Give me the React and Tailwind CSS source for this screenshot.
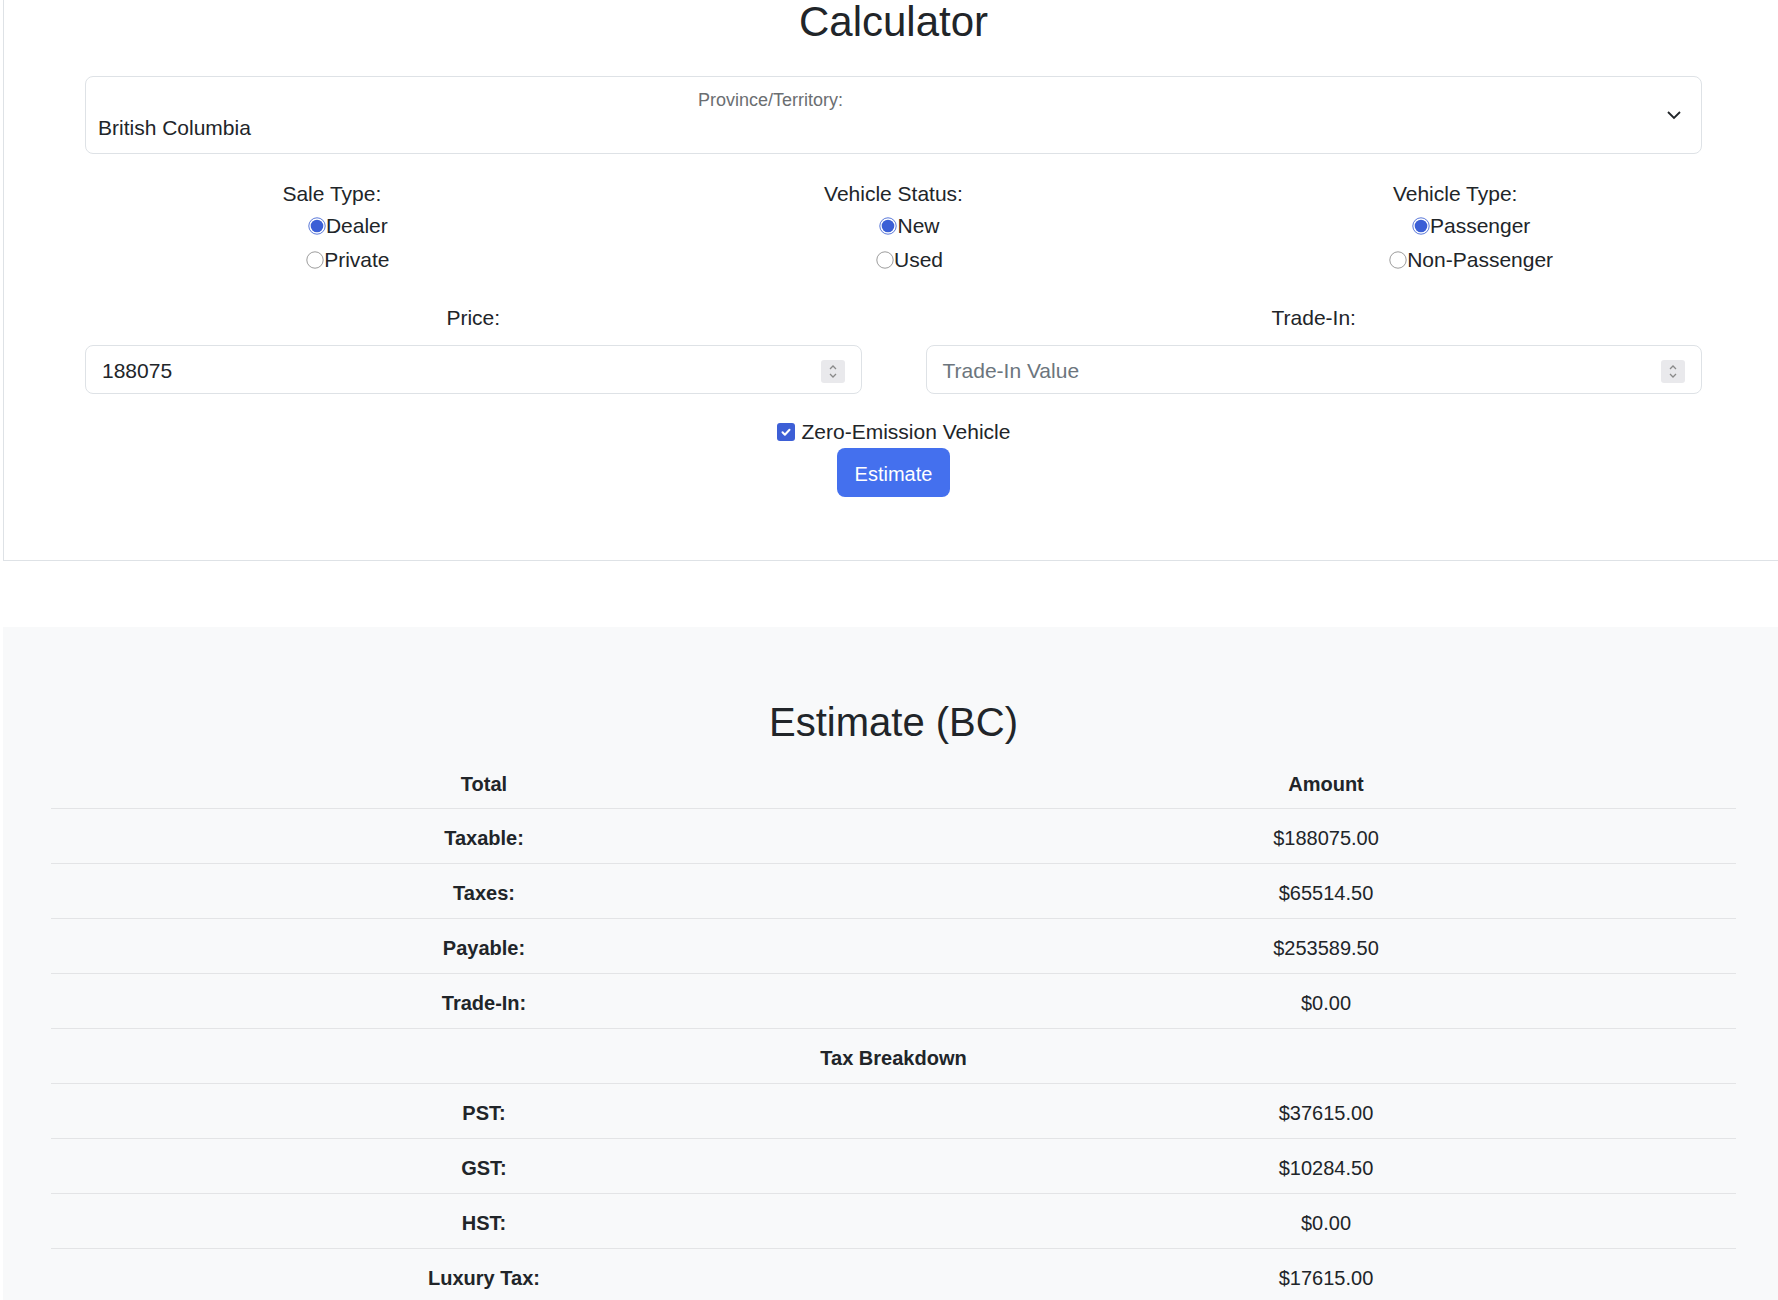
import React from "react";

// Vehicle tax calculator: form card on top, estimate table below.

const RadioDot = ({ checked }) => (
  <svg width="18" height="18" viewBox="0 0 18 18" className="shrink-0">
    <circle cx="9" cy="9" r="8.2" fill="#fff" stroke={checked ? "#5a78d8" : "#9c9c9c"} strokeWidth="1" />
    {checked && <circle cx="9" cy="9" r="6.3" fill="#3b5fd6" />}
  </svg>
);

const Option = ({ label, checked }) => (
  <div className="flex justify-center pl-8 leading-[34px]">
    <span className="flex items-center">
      <RadioDot checked={checked} />
      <span>{label}</span>
    </span>
  </div>
);

const RadioGroup = ({ title, options }) => (
  <div className="text-center">
    <div className="leading-[30px]">{title}</div>
    {options.map((o) => (
      <Option key={o.label} label={o.label} checked={o.checked} />
    ))}
  </div>
);

const Spinner = () => (
  <div className="w-[24px] h-[23px] rounded-[3px] bg-[#e9e9ec] flex items-center justify-center">
    <svg width="12" height="17" viewBox="0 0 12 17" fill="none" stroke="#8a8a8a" strokeWidth="1.3">
      <path d="M3 6l3-3 3 3" />
      <path d="M3 11l3 3 3-3" />
    </svg>
  </div>
);

const NumberField = ({ label, value, placeholder }) => (
  <div>
    <div className="text-center leading-[30px]">{label}</div>
    <div className="mt-[12px] h-[49px] border border-[#dee2e6] rounded-[8px] bg-white flex items-center pl-[16px] pr-[16px] pt-[3px]">
      <span className={value ? "flex-1" : "flex-1 text-[#6c757d]"}>{value || placeholder}</span>
      <Spinner />
    </div>
  </div>
);

const rows = [
  ["Taxable:", "$188075.00"],
  ["Taxes:", "$65514.50"],
  ["Payable:", "$253589.50"],
  ["Trade-In:", "$0.00"],
];

const breakdown = [
  ["PST:", "$37615.00"],
  ["GST:", "$10284.50"],
  ["HST:", "$0.00"],
  ["Luxury Tax:", "$17615.00"],
];

const Row = ({ label, value }) => (
  <div className="grid grid-cols-[866px_818px] h-[55px] items-center border-b border-[#e3e4e6] text-center pt-[3px]">
    <div className="font-bold">{label}</div>
    <div>{value}</div>
  </div>
);

export default function App() {
  return (
    <div className="w-full overflow-hidden bg-white text-[#212529] text-[21px] font-['Liberation_Sans',Arial,sans-serif]">
      {/* ===== Calculator card ===== */}
      <div className="ml-[3px] w-[1781px] border-l border-b border-r border-[#dee2e6] px-[47px] pb-[63px]">
        <h1 className="-mt-[3px] text-center text-[42px] leading-[50px] font-normal">Calculator</h1>

        {/* Province select */}
        <div className="mx-[34px] mt-[29px] h-[78px] border border-[#dee2e6] rounded-[8px] bg-white flex items-center">
          <div className="flex-1 pl-[12px]">
            <div className="pl-[600px] text-[18px] leading-[24px] text-[#6b6e71]">Province/Territory:</div>
            <div className="leading-[28px] mt-[2px]">British Columbia</div>
          </div>
          <svg width="16" height="10" viewBox="0 0 16 10" fill="none" stroke="#212529" strokeWidth="1.8" className="mr-[19px]">
            <path d="M2 2l6 6 6-6" />
          </svg>
        </div>

        {/* Radio groups */}
        <div className="grid grid-cols-3 mt-[25px]">
          <RadioGroup
            title="Sale Type:"
            options={[
              { label: "Dealer", checked: true },
              { label: "Private", checked: false },
            ]}
          />
          <RadioGroup
            title="Vehicle Status:"
            options={[
              { label: "New", checked: true },
              { label: "Used", checked: false },
            ]}
          />
          <RadioGroup
            title="Vehicle Type:"
            options={[
              { label: "Passenger", checked: true },
              { label: "Non-Passenger", checked: false },
            ]}
          />
        </div>

        {/* Price / trade-in */}
        <div className="mx-[34px] mt-[26px] grid grid-cols-2 gap-x-[64px]">
          <NumberField label="Price:" value="188075" />
          <NumberField label="Trade-In:" placeholder="Trade-In Value" />
        </div>

        {/* Zero emission + button */}
        <div className="mt-[23px] flex justify-center items-center leading-[30px]">
          <span className="w-[18px] h-[18px] rounded-[3px] bg-[#3d5fd6] flex items-center justify-center mr-[7px]">
            <svg width="12" height="12" viewBox="0 0 12 12" fill="none" stroke="#fff" strokeWidth="2" strokeLinecap="round" strokeLinejoin="round">
              <path d="M2.5 6.3l2.4 2.4 4.6-5" />
            </svg>
          </span>
          <span>Zero-Emission Vehicle</span>
        </div>
        <div className="mt-[1px] flex justify-center">
          <button className="w-[113px] h-[49px] rounded-[8px] bg-[#4470ee] text-white text-[20px] pt-[2px]">Estimate</button>
        </div>
      </div>

      {/* ===== Estimate section ===== */}
      <div className="ml-[3px] w-[1781px] mt-[66px] bg-[#f8f9fa] px-[48px] pt-[70px] pb-[40px]">
        <h2 className="text-center text-[40px] leading-[50px] font-normal">Estimate (BC)</h2>
        <div className="mt-[7px] text-[20px]">
          <div className="grid grid-cols-[866px_818px] h-[55px] items-center border-b border-[#e3e4e6] text-center font-bold pt-[5px]">
            <div>Total</div>
            <div>Amount</div>
          </div>
          {rows.map(([l, v]) => (
            <Row key={l} label={l} value={v} />
          ))}
          <div className="h-[55px] flex items-center justify-center border-b border-[#e3e4e6] font-bold pt-[3px]">Tax Breakdown</div>
          {breakdown.map(([l, v]) => (
            <Row key={l} label={l} value={v} />
          ))}
        </div>
      </div>
    </div>
  );
}
